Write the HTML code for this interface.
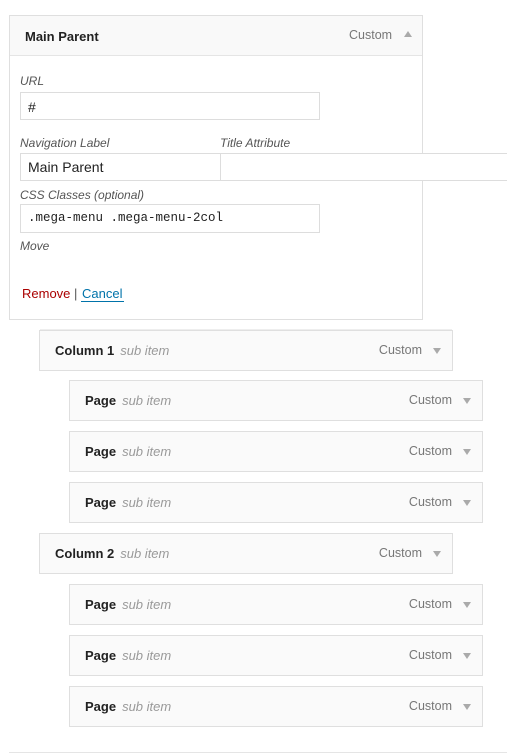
<!DOCTYPE html>
<html><head><style>
body{margin:0;width:507px;height:756px;background:#fff;position:relative;overflow:hidden;font-family:"Liberation Sans",sans-serif;}
.a{position:absolute;box-sizing:border-box}
.box{border:1px solid #dfdfdf;background:#fafafa;height:41px}
.t{position:absolute;top:12px;font-size:13px;font-weight:bold;color:#222}
.t i{font-weight:normal;color:#999;margin-left:6px}
.c{position:absolute;top:12px;right:30px;font-size:12.5px;color:#777}
.ar{position:absolute;top:17px;right:11px;width:0;height:0;border-left:4px solid transparent;border-right:4px solid transparent;border-top:6px solid #aaa}
.lbl{font-size:12px;font-style:italic;color:#555}
.in{border:1px solid #ddd;background:#fff;height:28px;font-size:14px;color:#222;padding:6px 7px}
</style></head><body>
<div class="a" style="left:9px;top:15px;width:414px;height:305px;border:1px solid #dfdfdf;background:#fff"></div>
<div class="a" style="left:10px;top:16px;width:412px;height:40px;background:#f9f9f9;border-bottom:1px solid #e5e5e5"></div>
<div class="a" style="left:25px;top:29px;font-size:13px;font-weight:bold;color:#222">Main Parent</div>
<div class="a" style="left:349px;top:28px;font-size:12.5px;color:#777">Custom</div>
<div class="a" style="left:404px;top:31px;width:0;height:0;border-left:4px solid transparent;border-right:4px solid transparent;border-bottom:6px solid #aaa"></div>
<div class="a lbl" style="left:20px;top:74px">URL</div>
<div class="a in" style="left:20px;top:92px;width:300px">#</div>
<div class="a lbl" style="left:20px;top:136px">Navigation Label</div>
<div class="a lbl" style="left:220px;top:136px">Title Attribute</div>
<div class="a in" style="left:20px;top:153px;width:201px;height:28px;padding-top:5px">Main Parent</div>
<div class="a in" style="left:220px;top:153px;width:300px"></div>
<div class="a lbl" style="left:20px;top:188px">CSS Classes (optional)</div>
<div class="a in" style="left:20px;top:204px;width:300px;height:29px;font-family:'Liberation Mono',monospace;font-size:12.5px">.mega-menu .mega-menu-2col</div>
<div class="a lbl" style="left:20px;top:239px">Move</div>
<div class="a" style="left:22px;top:286px;font-size:13px;color:#a00">Remove <span style="color:#555">|</span> <span style="color:#0073aa;border-bottom:1px solid #0073aa;padding:0 1px">Cancel</span></div>
<div class="a" style="left:40px;top:329px;width:412px;height:1px;background:#eee"></div>

<div class="a box" style="left:39px;top:330px;width:414px"><div class="t" style="left:15px">Column 1<i>sub item</i></div><div class="c">Custom</div><div class="ar"></div></div>
<div class="a box" style="left:69px;top:380px;width:414px"><div class="t" style="left:15px">Page<i>sub item</i></div><div class="c">Custom</div><div class="ar"></div></div>
<div class="a box" style="left:69px;top:431px;width:414px"><div class="t" style="left:15px">Page<i>sub item</i></div><div class="c">Custom</div><div class="ar"></div></div>
<div class="a box" style="left:69px;top:482px;width:414px"><div class="t" style="left:15px">Page<i>sub item</i></div><div class="c">Custom</div><div class="ar"></div></div>
<div class="a box" style="left:39px;top:533px;width:414px"><div class="t" style="left:15px">Column 2<i>sub item</i></div><div class="c">Custom</div><div class="ar"></div></div>
<div class="a box" style="left:69px;top:584px;width:414px"><div class="t" style="left:15px">Page<i>sub item</i></div><div class="c">Custom</div><div class="ar"></div></div>
<div class="a box" style="left:69px;top:635px;width:414px"><div class="t" style="left:15px">Page<i>sub item</i></div><div class="c">Custom</div><div class="ar"></div></div>
<div class="a box" style="left:69px;top:686px;width:414px"><div class="t" style="left:15px">Page<i>sub item</i></div><div class="c">Custom</div><div class="ar"></div></div>
<div class="a" style="left:9px;top:752px;width:498px;height:1px;background:#e5e5e5"></div>
</body></html>
